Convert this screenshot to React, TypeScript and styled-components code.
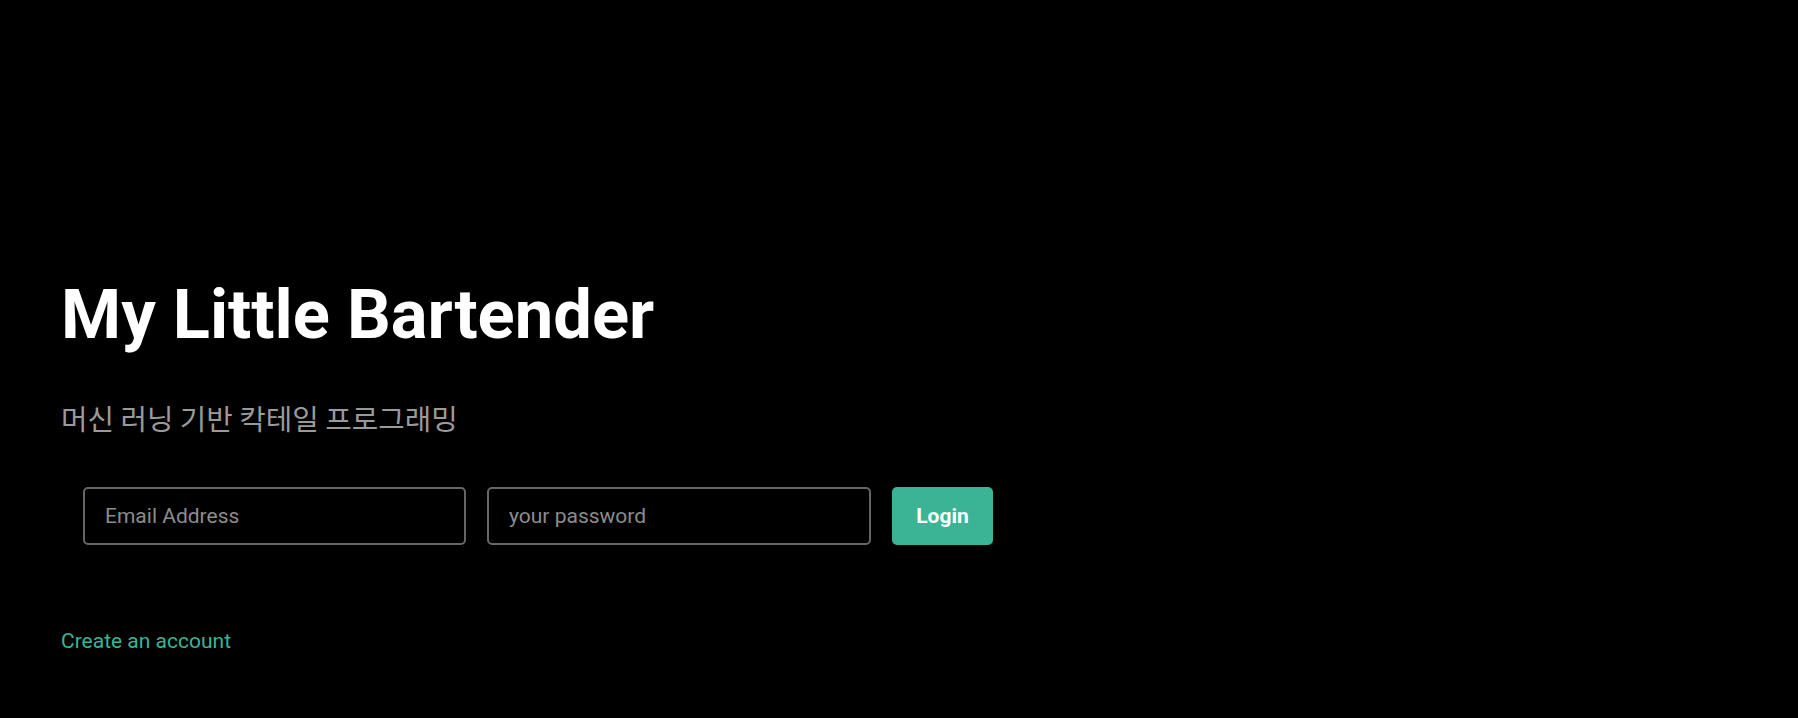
import React from 'react';
import styled, { createGlobalStyle } from 'styled-components';

const GlobalStyle = createGlobalStyle`
  html, body {
    margin: 0;
    padding: 0;
    background: #000;
  }
  body {
    font-family: Roboto, "Noto Sans CJK KR", sans-serif;
  }
`;

const Page = styled.div`
  min-height: 718px;
  box-sizing: border-box;
  padding: 275px 0 0 61px;
  background: #000;
`;

const Title = styled.h1`
  margin: 0;
  font-family: Roboto, sans-serif;
  font-weight: 700;
  font-size: 68.7px;
  line-height: 80px;
  color: #fff;
`;

const Subtitle = styled.p`
  margin: 45px 0 0;
  font-family: "Noto Sans CJK KR", sans-serif;
  font-weight: 400;
  font-size: 28.8px;
  line-height: 36px;
  color: #9a9a9a;
`;

const Form = styled.form`
  display: flex;
  align-items: stretch;
  gap: 21px;
  margin: 51px 0 0 22px;
`;

const Field = styled.input<{ $width: number }>`
  box-sizing: border-box;
  width: ${p => p.$width}px;
  height: 58px;
  padding: 0 20px;
  border: 2px solid #666;
  border-radius: 5px;
  background: #000;
  color: #ddd;
  font-family: Roboto, sans-serif;
  font-size: 21px;
  outline: none;

  &::placeholder {
    color: #8c8c8c;
  }
`;

const LoginButton = styled.button`
  box-sizing: border-box;
  width: 101px;
  height: 58px;
  border: none;
  border-radius: 5px;
  background: #3ab495;
  color: #fff;
  font-family: Roboto, sans-serif;
  font-weight: 700;
  font-size: 21px;
  cursor: pointer;
`;

const CreateLink = styled.a`
  display: block;
  margin-top: 84px;
  font-family: Roboto, sans-serif;
  font-size: 21px;
  line-height: 24px;
  color: #3ab495;
  text-decoration: none;
  width: fit-content;
`;

export default function App() {
  return (
    <>
      <GlobalStyle />
      <Page>
        <Title>My Little Bartender</Title>
        <Subtitle>머신 러닝 기반 칵테일 프로그래밍</Subtitle>
        <Form onSubmit={e => e.preventDefault()}>
          <Field $width={383} type="email" placeholder="Email Address" />
          <Field $width={384} type="password" placeholder="your password" />
          <LoginButton type="submit">Login</LoginButton>
        </Form>
        <CreateLink href="#">Create an account</CreateLink>
      </Page>
    </>
  );
}
